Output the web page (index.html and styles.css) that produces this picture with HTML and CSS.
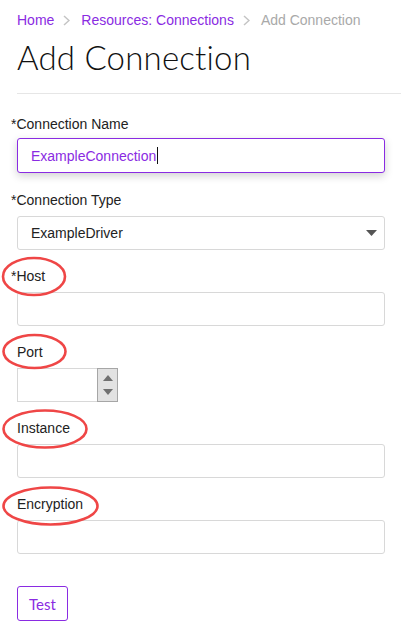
FILE: index.html
```html
<!DOCTYPE html>
<html>
<head>
<meta charset="utf-8">
<link rel="stylesheet" href="styles.css">
</head>
<body>
<div class="page">
  <nav class="crumbs">
    <a class="crumb">Home</a>
    <svg class="chev" width="7" height="11" viewBox="0 0 7 11"><path d="M1 1 L6 5.5 L1 10" fill="none" stroke="#c4c4c4" stroke-width="1.5"/></svg>
    <a class="crumb">Resources: Connections</a>
    <svg class="chev" width="7" height="11" viewBox="0 0 7 11"><path d="M1 1 L6 5.5 L1 10" fill="none" stroke="#c4c4c4" stroke-width="1.5"/></svg>
    <span class="crumb-current">Add Connection</span>
  </nav>
  <h1 class="title">Add Connection</h1>
  <div class="divider"></div>

  <form class="form">
    <div class="field field-first">
      <label class="label"><span class="req">*</span>Connection Name</label>
      <div class="input input-focus"><span class="value">ExampleConnection</span><span class="caret"></span></div>
    </div>
    <div class="field">
      <label class="label"><span class="req">*</span>Connection Type</label>
      <div class="input select">
        <span class="select-value">ExampleDriver</span>
        <svg class="arrow" width="11" height="6" viewBox="0 0 11 6"><path d="M0 0 H11 L5.5 6 Z" fill="#555"/></svg>
      </div>
    </div>
    <div class="field">
      <label class="label"><span class="req">*</span>Host</label>
      <div class="input"></div>
    </div>
    <div class="field">
      <label class="label">Port</label>
      <div class="port">
        <div class="port-text"></div>
        <div class="spinner">
          <svg width="10" height="6" viewBox="0 0 10 6"><path d="M0 6 L5 0 L10 6 Z" fill="#707070"/></svg>
          <svg width="10" height="6" viewBox="0 0 10 6"><path d="M0 0 L10 0 L5 6 Z" fill="#707070"/></svg>
        </div>
      </div>
    </div>
    <div class="field">
      <label class="label">Instance</label>
      <div class="input"></div>
    </div>
    <div class="field">
      <label class="label">Encryption</label>
      <div class="input"></div>
    </div>
    <button type="button" class="btn">Test</button>
  </form>
</div>
<svg class="annotations" width="401" height="636" viewBox="0 0 401 636">
  <ellipse cx="34" cy="276.5" rx="31" ry="18.5" fill="none" stroke="#ef4646" stroke-width="2.6"/>
  <ellipse cx="34.5" cy="351.5" rx="31" ry="16.5" fill="none" stroke="#ef4646" stroke-width="2.6"/>
  <ellipse cx="45" cy="429" rx="41.5" ry="18.5" fill="none" stroke="#ef4646" stroke-width="2.6"/>
  <ellipse cx="50.5" cy="506" rx="47" ry="18.5" fill="none" stroke="#ef4646" stroke-width="2.6"/>
</svg>
</body>
</html>
```
FILE: styles.css
```css
html, body {
  margin: 0;
  padding: 0;
  background: #fff;
}
body {
  font-family: "Liberation Sans", Arial, sans-serif;
  font-size: 14px;
  color: #222;
  position: relative;
  width: 401px;
  height: 636px;
  overflow: hidden;
}
.page {
  padding: 12px 0 0 17px;
}
.crumbs {
  display: flex;
  align-items: center;
  height: 16px;
  line-height: 16px;
}
.crumb {
  color: #8a2be2;
  text-decoration: none;
}
.chev {
  margin: 0 11px 0 9px;
  display: block;
}
.crumb-current {
  color: #a9a9a9;
}
.title {
  margin: 10px 0 0 0;
  font-family: Lato, "Liberation Sans", sans-serif;
  font-weight: 300;
  font-size: 33px;
  line-height: 38px;
  color: #111;
  letter-spacing: 0.2px;
}
.divider {
  margin-top: 17px;
  height: 1px;
  background: #e6e6e6;
}
.form {
  padding-top: 22px;
  display: flex;
  flex-direction: column;
}
.field {
  display: flex;
  flex-direction: column;
  margin-bottom: 18px;
}
.field-first {
  margin-bottom: 19px;
}
.field-first .label {
  margin-bottom: 6px;
}
.label {
  line-height: 16px;
  height: 16px;
  margin-bottom: 8px;
  color: #222;
}
.req {
  margin-left: -6px;
}
.input {
  box-sizing: border-box;
  width: 368px;
  height: 34px;
  border: 1px solid #d8d8d8;
  border-radius: 3px;
  background: #fff;
  display: flex;
  align-items: center;
  padding-left: 13px;
}
.input-focus {
  height: 35px;
  border: 1.5px solid #8a2be2;
  box-shadow: 0 3px 8px rgba(0, 0, 0, 0.18);
}
.value {
  color: #8a2be2;
}
.caret {
  display: inline-block;
  width: 1px;
  height: 17px;
  background: #111;
  margin-left: 1px;
}
.select {
  justify-content: space-between;
  padding-right: 7px;
}
.select-value {
  color: #222;
}
.arrow {
  display: block;
}
.port {
  box-sizing: border-box;
  width: 101px;
  height: 34px;
  border: 1px solid #d8d8d8;
  border-right: none;
  display: flex;
}
.port-text {
  flex: 1;
}
.spinner {
  box-sizing: border-box;
  width: 21px;
  background: #e2e2e2;
  border: 1px solid #a6a6a6;
  margin: -1px 0;
  display: flex;
  flex-direction: column;
  align-items: center;
  justify-content: center;
  gap: 8px;
}
.spinner svg {
  display: block;
}
.btn {
  margin-top: 14px;
  align-self: flex-start;
  box-sizing: border-box;
  width: 51px;
  height: 35px;
  border: 1.5px solid #8a2be2;
  border-radius: 3px;
  background: #fff;
  color: #8a2be2;
  font-family: Lato, "Liberation Sans", sans-serif;
  font-size: 15px;
  padding: 0;
}
.annotations {
  position: absolute;
  left: 0;
  top: 0;
  pointer-events: none;
}
```
